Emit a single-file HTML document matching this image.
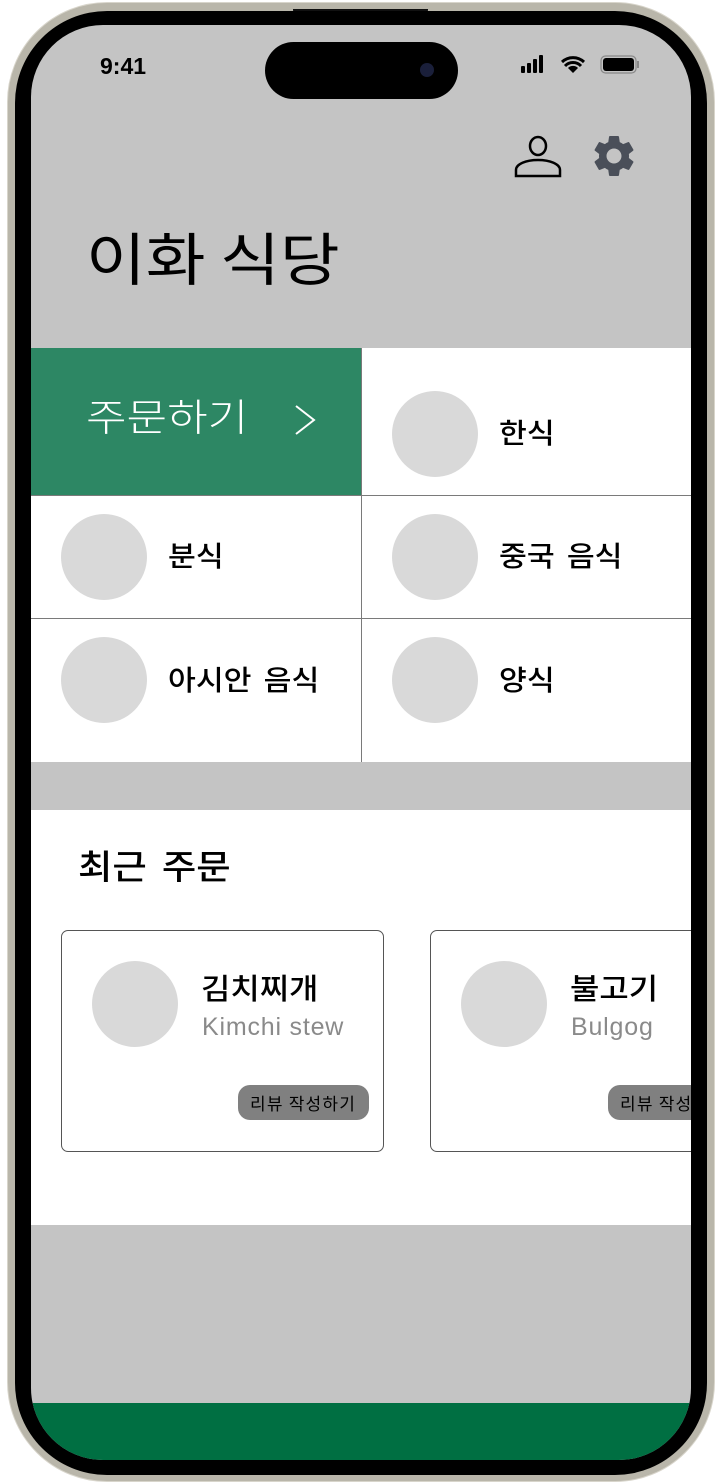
<!DOCTYPE html>
<html><head><meta charset="utf-8"><style>
*{margin:0;padding:0;box-sizing:border-box}
body{width:721px;height:1484px;background:#fff;position:relative;overflow:hidden;font-family:"Liberation Sans","Noto Sans CJK KR",sans-serif}
.abs{position:absolute}
.body{left:7px;top:2px;width:708px;height:1480px;border-radius:100px;background:#b9b6aa;border:1px solid #d8d5cb}
.bez{left:15px;top:11px;width:692px;height:1464px;border-radius:92px;background:#000}
.screen{left:31px;top:25px;width:660px;height:1435px;border-radius:72px;background:#c4c4c4;overflow:hidden}
.k{font-family:"Noto Sans CJK KR","Liberation Sans",sans-serif}
.circ{position:absolute;width:86px;height:86px;border-radius:50%;background:#d9d9d9}
.lbl{position:absolute;font-size:28px;font-weight:500;color:#000;line-height:1;word-spacing:5px;white-space:nowrap;transform:scaleX(1.08);transform-origin:left top}
.cell{position:absolute;background:#fff}
.card{position:absolute;top:905px;width:323px;height:222px;border:1px solid #555;border-radius:7px;background:#fff}
.btn{position:absolute;background:#808080;border-radius:12px;height:35px;font-size:17px;line-height:35px;color:#000;padding-left:12px;white-space:nowrap;letter-spacing:1.2px}
.sx{transform-origin:left top}
</style></head><body>
<div class="abs body"></div>
<div class="abs" style="left:293px;top:9px;width:135px;height:5px;background:#111;border-radius:0 0 4px 4px"></div>
<div class="abs bez"></div>
<div class="abs screen">
  <div class="abs" style="left:69px;top:28px;font-size:23px;font-weight:bold;color:#000">9:41</div>
  <div class="abs" style="left:234px;top:17px;width:193px;height:57px;border-radius:29px;background:#000"></div>
  <div class="abs" style="left:389px;top:38px;width:14px;height:14px;border-radius:50%;background:#1a1f3a"></div>
  <svg class="abs" style="left:488px;top:28px" width="125" height="24" viewBox="0 0 125 24">
    <rect x="2" y="13" width="4" height="7" rx="1" fill="#000"/><rect x="8" y="10" width="4" height="10" rx="1" fill="#000"/><rect x="14" y="6" width="4" height="14" rx="1" fill="#000"/><rect x="20" y="2" width="4" height="18" rx="1" fill="#000"/>
    <path d="M54 20 L49 15 A7 7 0 0 1 59 15Z" fill="#000"/>
    <path d="M43 9 A16 16 0 0 1 65 9" stroke="#000" stroke-width="3" fill="none"/>
    <path d="M46 13 A11 11 0 0 1 62 13" stroke="#000" stroke-width="3" fill="none"/>
    <rect x="82" y="3" width="35" height="17" rx="4.5" fill="none" stroke="#888" stroke-width="1.2"/>
    <rect x="84" y="5" width="31" height="13" rx="3" fill="#000"/>
    <rect x="118" y="8" width="2" height="7" fill="#888"/>
  </svg>
  <svg class="abs" style="left:483px;top:105px" width="48" height="50" viewBox="0 0 48 50">
    <ellipse cx="24" cy="16" rx="8" ry="9" fill="none" stroke="#000" stroke-width="2.5"/>
    <path d="M2 46 L46 46 L46 40 C46 34 36 30 24 30 C12 30 2 34 2 40 Z" fill="none" stroke="#000" stroke-width="2.5"/>
  </svg>
  <svg class="abs" style="left:558px;top:106px" width="50" height="50" viewBox="0 0 24 24">
    <path fill="#4a4f59" d="M19.14 12.94c.04-.3.06-.61.06-.94 0-.32-.02-.64-.07-.94l2.03-1.58a.49.49 0 0 0 .12-.61l-1.92-3.32a.488.488 0 0 0-.59-.22l-2.39.96c-.5-.38-1.03-.7-1.62-.94l-.36-2.54a.484.484 0 0 0-.48-.41h-3.84c-.24 0-.43.17-.47.41l-.36 2.54c-.59.24-1.13.57-1.62.94l-2.39-.96c-.22-.08-.47 0-.59.22L2.74 8.87c-.12.21-.08.47.12.61l2.03 1.58c-.05.3-.09.63-.09.94s.02.64.07.94l-2.03 1.58a.49.49 0 0 0-.12.61l1.92 3.32c.12.22.37.29.59.22l2.39-.96c.5.38 1.03.7 1.62.94l.36 2.54c.05.24.24.41.48.41h3.84c.24 0 .44-.17.47-.41l.36-2.54c.59-.24 1.13-.56 1.62-.94l2.39.96c.22.08.47 0 .59-.22l1.92-3.32c.12-.22.07-.47-.12-.61l-2.01-1.58zM12 15.6c-1.98 0-3.6-1.62-3.6-3.6s1.62-3.6 3.6-3.6 3.6 1.62 3.6 3.6-1.62 3.6-3.6 3.6z"/>
  </svg>
  <div class="abs k sx" style="left:55px;top:203px;font-size:57px;line-height:1;color:#000;font-weight:400;white-space:nowrap;transform:scaleX(1.14)">이화 식당</div>

  <div class="abs" style="left:0;top:323px;width:660px;height:414px;background:#7a7a7a"></div>
  <div class="cell" style="left:0;top:323px;width:330px;height:147px;background:#2d8764"></div>
  <div class="abs k sx" style="left:55px;top:371px;font-size:38px;font-weight:300;color:#fff;line-height:1;white-space:nowrap;transform:scaleX(1.16)">주문하기</div>
  <svg class="abs" style="left:263px;top:380px" width="22" height="30" viewBox="0 0 22 30"><path d="M2 1 L20 15 L2 29" fill="none" stroke="#fff" stroke-width="2"/></svg>
  <div class="cell" style="left:331px;top:323px;width:329px;height:147px"></div>
  <div class="cell" style="left:0;top:471px;width:330px;height:122px"></div>
  <div class="cell" style="left:331px;top:471px;width:329px;height:122px"></div>
  <div class="cell" style="left:0;top:594px;width:330px;height:143px"></div>
  <div class="cell" style="left:331px;top:594px;width:329px;height:143px"></div>

  <div class="circ" style="left:361px;top:366px"></div><div class="lbl k" style="left:468px;top:393px">한식</div>
  <div class="circ" style="left:30px;top:489px"></div><div class="lbl k" style="left:137px;top:516px">분식</div>
  <div class="circ" style="left:361px;top:489px"></div><div class="lbl k" style="left:468px;top:516px">중국 음식</div>
  <div class="circ" style="left:30px;top:612px"></div><div class="lbl k" style="left:137px;top:640px">아시안 음식</div>
  <div class="circ" style="left:361px;top:612px"></div><div class="lbl k" style="left:468px;top:640px">양식</div>

  <div class="abs" style="left:0;top:785px;width:660px;height:415px;background:#fff"></div>
  <div class="abs k sx" style="left:47px;top:823px;font-size:34px;font-weight:500;color:#000;line-height:1;word-spacing:6px;white-space:nowrap;transform:scaleX(1.1)">최근 주문</div>

  <div class="card" style="left:30px">
    <div class="circ" style="left:30px;top:30px"></div>
    <div class="abs k sx" style="left:139px;top:42px;font-size:29px;font-weight:500;line-height:1;color:#000;white-space:nowrap;transform:scaleX(1.1)">김치찌개</div>
    <div class="abs" style="left:140px;top:84px;font-size:25px;line-height:1;color:#8a8a8a;letter-spacing:0.8px;white-space:nowrap">Kimchi stew</div>
    <div class="btn k" style="left:176px;top:154px;width:131px">리뷰 작성하기</div>
  </div>
  <div class="card" style="left:399px;width:280px">
    <div class="circ" style="left:30px;top:30px"></div>
    <div class="abs k sx" style="left:139px;top:42px;font-size:29px;font-weight:500;line-height:1;color:#000;white-space:nowrap;transform:scaleX(1.1)">불고기</div>
    <div class="abs" style="left:140px;top:84px;font-size:25px;line-height:1;color:#8a8a8a;letter-spacing:0.8px;white-space:nowrap">Bulgog</div>
    <div class="btn k" style="left:177px;top:154px;width:131px">리뷰 작성하기</div>
  </div>

  <div class="abs" style="left:0;top:1378px;width:660px;height:60px;background:#006f42"></div>
</div>
</body></html>
